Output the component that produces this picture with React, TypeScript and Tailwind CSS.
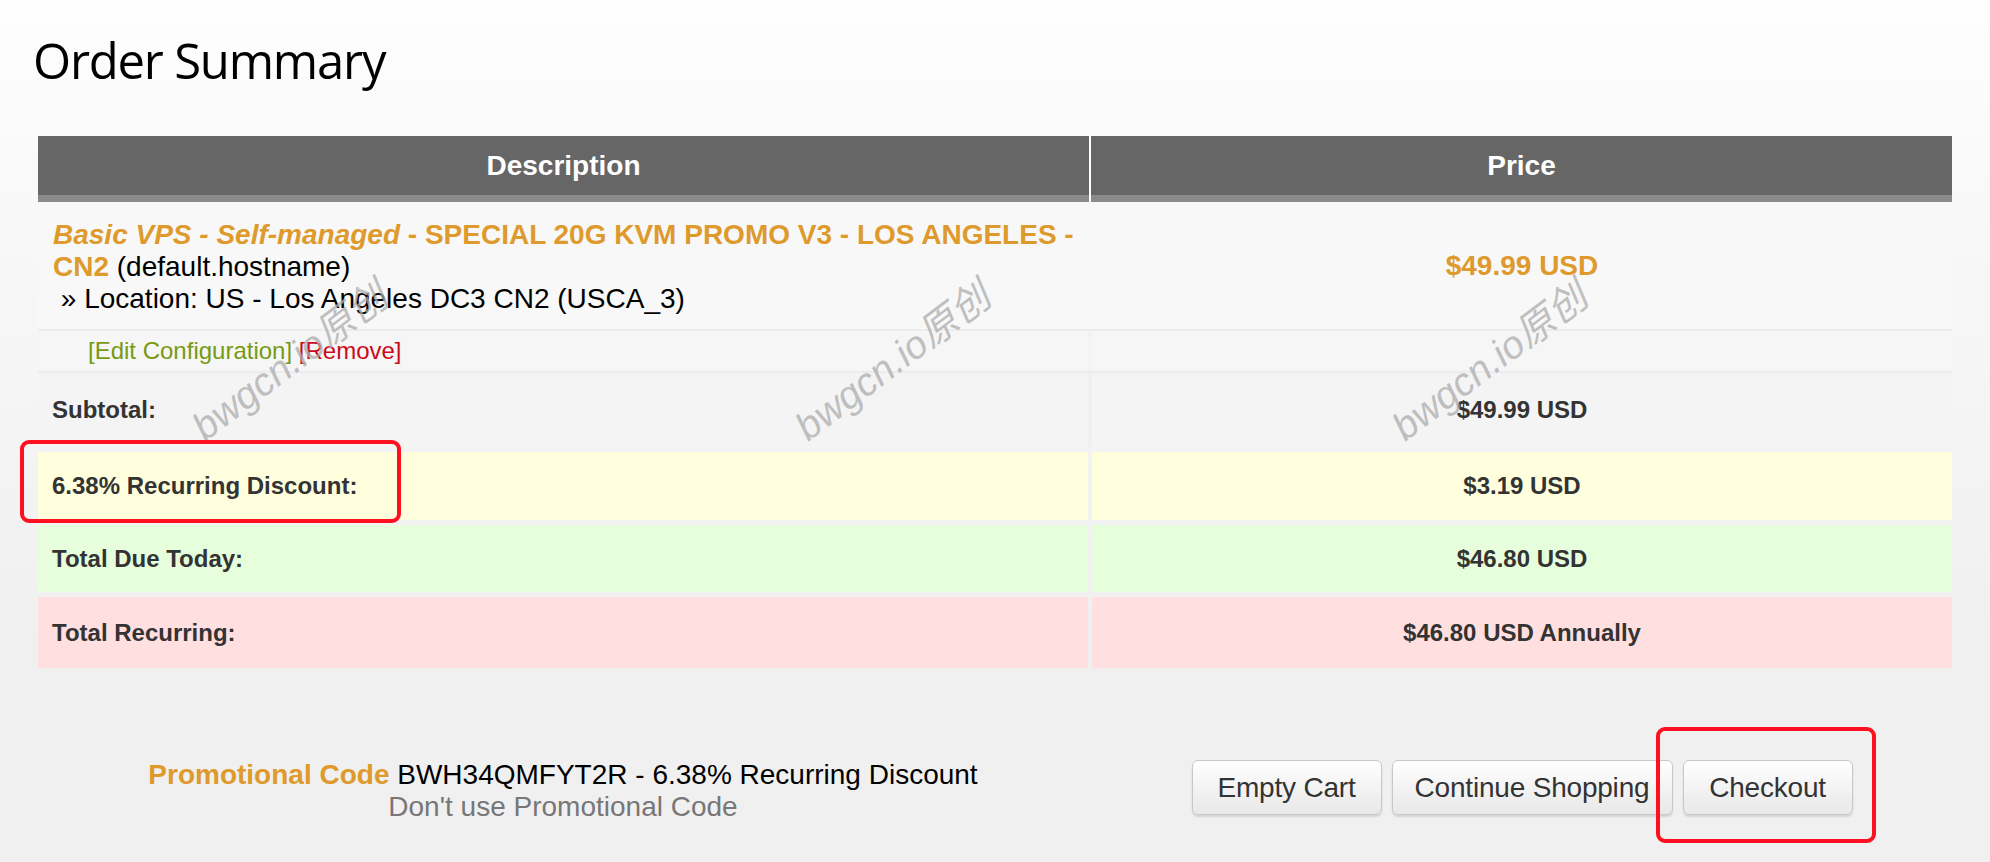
import React from 'react';

const Watermark = ({ left }: { left: string }) => (
  <span
    className={`pointer-events-none absolute top-[362px] ${left} -translate-x-1/2 -translate-y-1/2 -rotate-[37deg] whitespace-nowrap font-['Liberation_Sans','Noto_Sans_CJK_SC',sans-serif] text-[39px] italic text-[#adadad]/75`}
  >
    bwgcn.io原创
  </span>
);

const SummaryRow = ({ label, value, bg, height }: { label: string; value: string; bg: string; height: string }) => (
  <div className={`grid grid-cols-[1050px_1fr] gap-x-[4px] ${height}`}>
    <div className={`flex items-center pl-[14px] text-[24px] font-bold text-[#333] ${bg}`}>{label}</div>
    <div className={`flex items-center justify-center text-[24px] font-bold text-[#333] ${bg}`}>{value}</div>
  </div>
);

const Button = ({ children, width }: { children: React.ReactNode; width: string }) => (
  <button
    type="button"
    className={`h-[55px] ${width} rounded-[6px] border border-[#c8c8c8] bg-gradient-to-b from-white to-[#e8e8e8] text-center text-[28px] tracking-[-0.2px] text-[#333] shadow-[0_2px_2px_rgba(0,0,0,0.12)]`}
  >
    {children}
  </button>
);

export default function App() {
  return (
    <div className="relative h-[862px] w-[1990px] overflow-hidden bg-[linear-gradient(to_bottom,#fefefe_0px,#f8f8f8_220px,#f0f0f0_640px)] font-['Liberation_Sans',Arial,sans-serif]">
      <div className="px-[38px] pt-[37px]">
        <h1 className="-ml-[5px] h-[47px] font-['Open_Sans',sans-serif] text-[49px] leading-[47px] tracking-[-1.2px] text-black">
          Order Summary
        </h1>

        <div className="mt-[52px]">
          {/* header */}
          <div className="grid grid-cols-[1051px_1fr] gap-x-[2px] bg-white">
            <div className="flex h-[66px] items-center justify-center border-b-[7px] border-[#8a8a8a] bg-[#666] text-[28px] font-bold text-white">
              Description
            </div>
            <div className="flex h-[66px] items-center justify-center border-b-[7px] border-[#8a8a8a] bg-[#666] text-[28px] font-bold text-white">
              Price
            </div>
          </div>

          <div className="bg-[#ececec]">
            {/* product */}
            <div className="grid h-[127px] grid-cols-[1050px_1fr] gap-x-[4px] bg-[#f8f8f8]">
              <div className="pl-[15px] pt-[17px] text-[28px] leading-[32px] text-black">
                <div className="whitespace-nowrap font-bold text-[#de9a2c]">
                  <em>Basic VPS - Self-managed</em> - SPECIAL 20G KVM PROMO V3 - LOS ANGELES -
                </div>
                <div className="whitespace-nowrap">
                  <span className="font-bold text-[#de9a2c]">CN2</span> (default.hostname)
                </div>
                <div className="whitespace-nowrap">{'\u00a0'}» Location: US - Los Angeles DC3 CN2 (USCA_3)</div>
              </div>
              <div className="flex items-center justify-center text-[28px] font-bold text-[#de9a2c]">$49.99 USD</div>
            </div>

            {/* actions */}
            <div className="mt-[2px] grid h-[40px] grid-cols-[1050px_1fr] gap-x-[4px] bg-[#f3f3f3]">
              <div className="flex items-center bg-[#f6f6f6] pl-[50px] text-[24px]">
                <a className="text-[#779a10]">[Edit Configuration]</a>
                <span>&nbsp;</span>
                <a className="text-[#cc0a1a]">[Remove]</a>
              </div>
              <div className="bg-[#f6f6f6]" />
            </div>

            <div className="mt-[2px] bg-[#efefef]">
              <SummaryRow label="Subtotal:" value="$49.99 USD" bg="bg-[#f4f4f4]" height="h-[74px]" />
            </div>
          </div>
          <div className="mt-[5px]">
            <SummaryRow label="6.38% Recurring Discount:" value="$3.19 USD" bg="bg-[#ffffdd]" height="h-[68px]" />
          </div>
          <div className="mt-[5px]">
            <SummaryRow label="Total Due Today:" value="$46.80 USD" bg="bg-[#e6fedc]" height="h-[67px]" />
          </div>
          <div className="mt-[5px]">
            <SummaryRow label="Total Recurring:" value="$46.80 USD Annually" bg="bg-[#ffdfdf]" height="h-[71px]" />
          </div>
        </div>

        {/* promo + buttons */}
        <div className="mt-[91px] grid grid-cols-[1050px_1fr] gap-x-[4px]">
          <div className="text-center text-[28px] leading-[32px]">
            <div>
              <span className="font-bold text-[#de9a2c]">Promotional Code</span>{' '}
              <span className="text-black">BWH34QMFYT2R - 6.38% Recurring Discount</span>
            </div>
            <div className="text-[#777]">Don&apos;t use Promotional Code</div>
          </div>
          <div className="flex justify-center gap-[10px] pt-[1px]">
            <Button width="w-[190px]">Empty Cart</Button>
            <Button width="w-[281px]">Continue Shopping</Button>
            <Button width="w-[170px]">Checkout</Button>
          </div>
        </div>
      </div>

      <Watermark left="left-[290px]" />
      <Watermark left="left-[893px]" />
      <Watermark left="left-[1490px]" />

      {/* annotation boxes */}
      <div className="pointer-events-none absolute left-[20px] top-[440px] h-[83px] w-[381px] rounded-[9px] border-[4px] border-[#fe1020]" />
      <div className="pointer-events-none absolute left-[1656px] top-[727px] h-[116px] w-[220px] rounded-[9px] border-[4px] border-[#fe1020]" />
    </div>
  );
}
